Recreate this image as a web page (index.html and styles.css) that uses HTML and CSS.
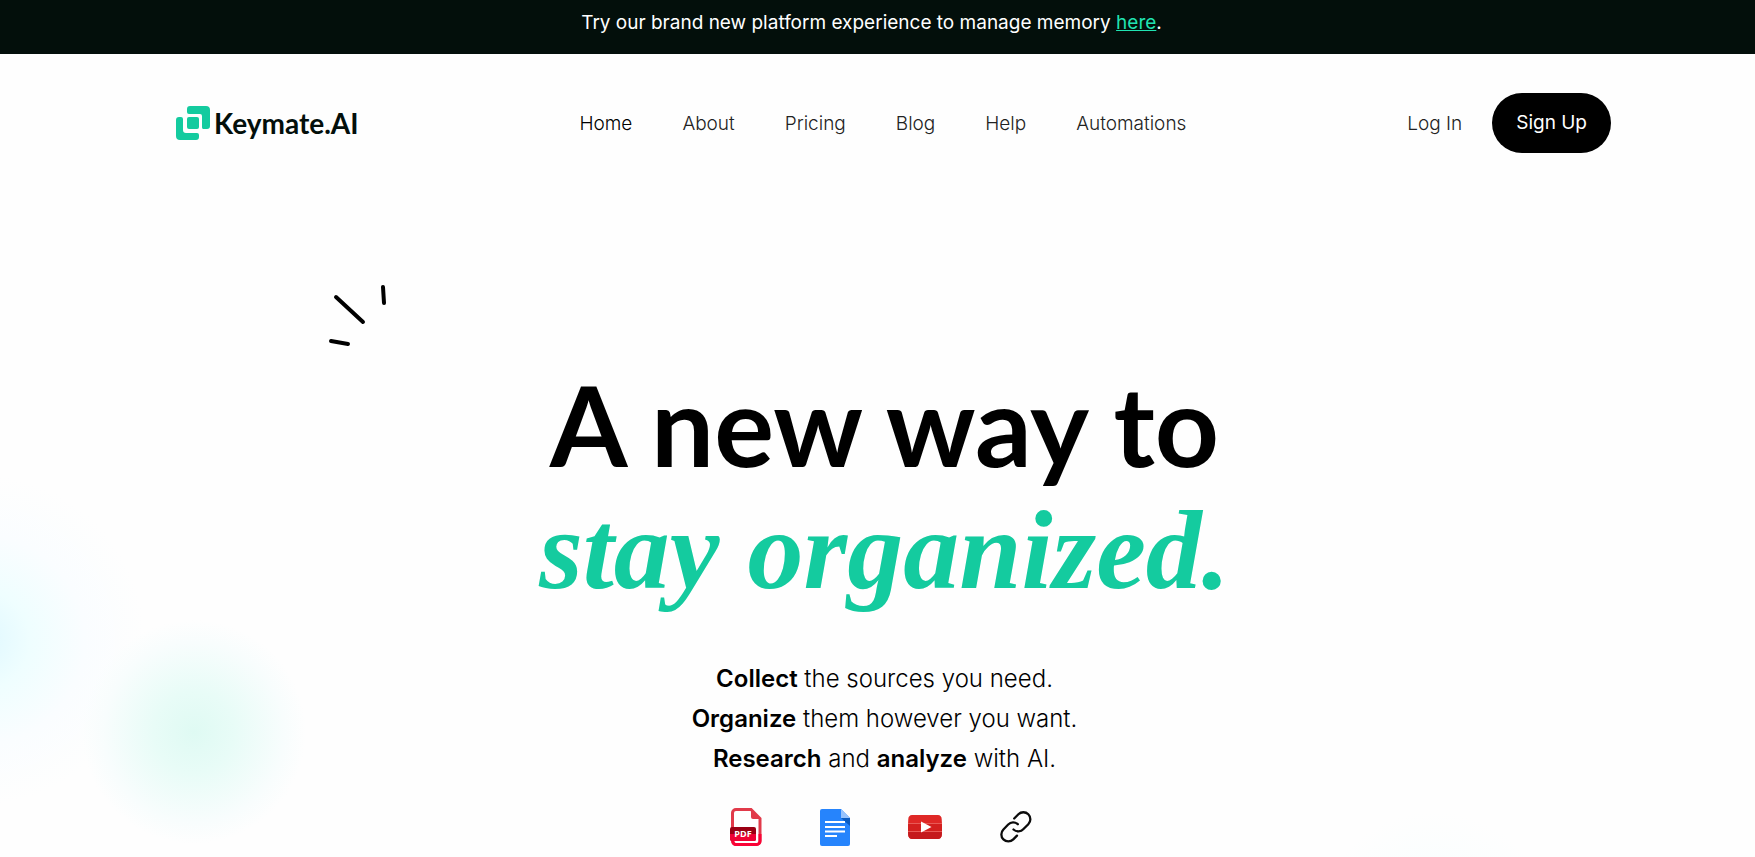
FILE: index.html
```html
<!DOCTYPE html>
<html lang="en">
<head>
  <meta charset="UTF-8" />
  <meta name="viewport" content="width=device-width, initial-scale=1" />
  <title>Keymate.AI</title>
  <link rel="stylesheet" href="styles.css">
</head>
<body>
  <div class="banner">
    <p>Try our brand new platform experience to manage memory <a href="#">here</a>.</p>
  </div>

  <header class="header">
    <a href="#" class="logo">
      <svg width="34" height="34" viewBox="0 0 34 34" fill="#14cb9f" aria-hidden="true">
        <path d="M14 0H30a4 4 0 0 1 4 4V20a3 3 0 0 1-3 3H27a2 2 0 0 1-1-2V10a2 2 0 0 0-2-2H13a2 2 0 0 1-2-2V3a3 3 0 0 1 3-3z"/>
        <path d="M3 11H5a2 2 0 0 1 2 2V24a3 3 0 0 0 3 3H21a2 2 0 0 1 2 2V31a3 3 0 0 1-3 3H4a4 4 0 0 1-4-4V14a3 3 0 0 1 3-3z"/>
        <rect x="11" y="11" width="12" height="12" rx="2"/>
      </svg>
      <span>Keymate.AI</span>
    </a>

    <nav class="nav">
      <a href="#" class="active">Home</a>
      <a href="#">About</a>
      <a href="#">Pricing</a>
      <a href="#">Blog</a>
      <a href="#">Help</a>
      <a href="#">Automations</a>
    </nav>

    <div class="account">
      <a href="#">Log In</a>
      <a href="#" class="signup">Sign Up</a>
    </div>
  </header>

  <main class="hero">
    <svg class="rays" width="62" height="66" viewBox="0 0 62 66" fill="none" stroke="#000" stroke-width="4" stroke-linecap="round" aria-hidden="true">
      <path d="M8 14L35 39M55 4L56 20M3 58L20 61"/>
    </svg>

    <h1>A new way to <em>stay organized.</em></h1>

    <p class="lead">
      <strong>Collect</strong> the sources you need.<br>
      <strong>Organize</strong> them however you want.<br>
      <strong>Research</strong> and <strong>analyze</strong> with AI.
    </p>

    <div class="sources">
      <!-- pdf -->
      <svg width="32" height="38" viewBox="0 0 32 38">
        <path d="M6 1.500H21L30 10.500V33a3.500 3.500 0 0 1-3.500 3.500H6A3.500 3.500 0 0 1 2.500 33V5A3.500 3.500 0 0 1 6 1.500z" fill="#fff" stroke="#e13a4a" stroke-width="3"/>
        <path d="M3 27V33a3 3 0 0 0 3 3.500H26.500a3.500 3.500 0 0 0 3.500-3.500V26" fill="none" stroke="#fa0336" stroke-width="3"/>
        <path d="M21 1L31 11H23a2 2 0 0 1-2-2z" fill="#e13a4a"/>
        <rect x="0" y="19" width="26" height="14" rx="2" fill="#9b0014"/>
        <path d="M0 26H26V31a2 2 0 0 1-2 2H2a2 2 0 0 1-2-2z" fill="#ee0234"/>
        <text class="pdf-text" x="13" y="29" text-anchor="middle">PDF</text>
      </svg>
      <!-- document -->
      <svg width="30" height="37" viewBox="0 0 30 37">
        <path d="M2 0H21L30 9V35a2 2 0 0 1-2 2H2a2 2 0 0 1-2-2V2a2 2 0 0 1 2-2z" fill="#2684fc"/>
        <path d="M21 9H30V17z" fill="#0b5cc2"/>
        <path d="M21 0L30 9H21z" fill="#97c3fd"/>
        <path d="M5 13H25M5 18H25M5 22.500H25M5 27H17" stroke="#fff" stroke-width="2"/>
      </svg>
      <!-- video -->
      <svg width="34" height="24" viewBox="0 0 34 24">
        <path d="M4 0Q17-.6 30 0Q33.500.3 33.700 4Q34.300 12 33.700 20Q33.500 23.700 30 24Q17 24.600 4 24Q.5 23.700.3 20Q-.3 12 .3 4Q.5.3 4 0z" fill="#df2826"/>
        <path d="M0 9H34V16H0z" fill="#d3201f"/>
        <path d="M0 16.500H34Q34 20 33.500 21.500Q33 23.700 30 24Q17 24.600 4 24Q1 23.700.5 21.500Q0 20 0 16.500z" fill="#c51a1d"/>
        <path d="M0 8.500H34M0 16.500H34" stroke="#e85a56" stroke-width="1"/>
        <path d="M13 6.500L23.500 12L13 17.500z" fill="#fff"/>
      </svg>
      <!-- link -->
      <svg width="32" height="32" viewBox="0 0 32 32" fill="none" stroke="#0b0b0b" stroke-width="2.300" stroke-linecap="round">
        <path d="M13.500 18.500A7 7 0 0 0 23.500 18L28.300 13.200A7 7 0 0 0 18.400 3.300L14.200 7.500"/>
        <path d="M17.800 13.200A7 7 0 0 0 8.200 13.500L3.400 18.500A7 7 0 0 0 13.300 28.400L17 24.600"/>
      </svg>
    </div>
  </main>
</body>
</html>
```

FILE: styles.css
```css
* {
  box-sizing: border-box;
}

body {
  margin: 0;
  min-height: 100vh;
  display: flex;
  flex-direction: column;
  background: #fefefe;
  color: #000;
  font-family: Inter, "Liberation Sans", sans-serif;
  font-size: 19px;
}

a {
  color: inherit;
  text-decoration: none;
}

.banner {
  background: #030f0b;
  color: #fff;
  text-align: center;
  padding: 9px 12px 17px 0;
  line-height: 28px;
}

.banner p {
  margin: 0;
}

.banner a {
  color: #20e3b2;
  text-decoration: underline;
}

.header {
  display: flex;
  align-items: center;
  justify-content: space-between;
  padding: 39px 144px 39px 176px;
}

.logo {
  display: flex;
  align-items: center;
  gap: 4px;
  color: #030f0b;
  font-family: Lato, sans-serif;
  font-size: 28px;
  font-weight: bold;
  line-height: 34px;
}

.nav {
  display: flex;
  gap: 50px;
  font-weight: 300;
  color: #222;
}

.nav .active {
  color: #000;
}

.account {
  display: flex;
  align-items: center;
  gap: 30px;
  font-weight: 300;
  color: #222;
}

.signup {
  padding: 0 24px;
  border-radius: 30px;
  background: #000;
  color: #fff;
  font-weight: 400;
  line-height: 60px;
}

.hero {
  flex: 1;
  position: relative;
  padding: 169px 0 10px 14px;
  text-align: center;
  background:
    radial-gradient(circle at 194px 540px, #dffaf3 0, #e8fcf7 40px, #f8fdfd 90px, rgba(254,254,254,0) 112px),
    radial-gradient(circle at -20px 448px, #dff8ff 0, #effeff 50px, #fafdff 105px, rgba(254,254,254,0) 165px),
    radial-gradient(circle at 1434px 740px, #f6fffd 0, rgba(254,254,254,0) 120px);
}

.rays {
  position: absolute;
  left: 328px;
  top: 91px;
}

h1 {
  margin: 0;
  font-family: Lato, sans-serif;
  font-size: 112px;
  font-weight: 700;
  line-height: 126px;
}

h1 em {
  display: block;
  color: #14cb9f;
  font-family: "Liberation Serif", serif;
  font-weight: bold;
}

.lead {
  margin: 46px 0 29px;
  font-size: 24px;
  font-weight: 300;
  line-height: 40px;
}

.lead strong {
  font-weight: 600;
}

.sources {
  display: flex;
  justify-content: center;
  align-items: center;
  gap: 58px;
  padding-right: 7px;
}

.pdf-text {
  font-family: "Open Sans", sans-serif;
  font-size: 9px;
  font-weight: bold;
  fill: #fff;
}
```
